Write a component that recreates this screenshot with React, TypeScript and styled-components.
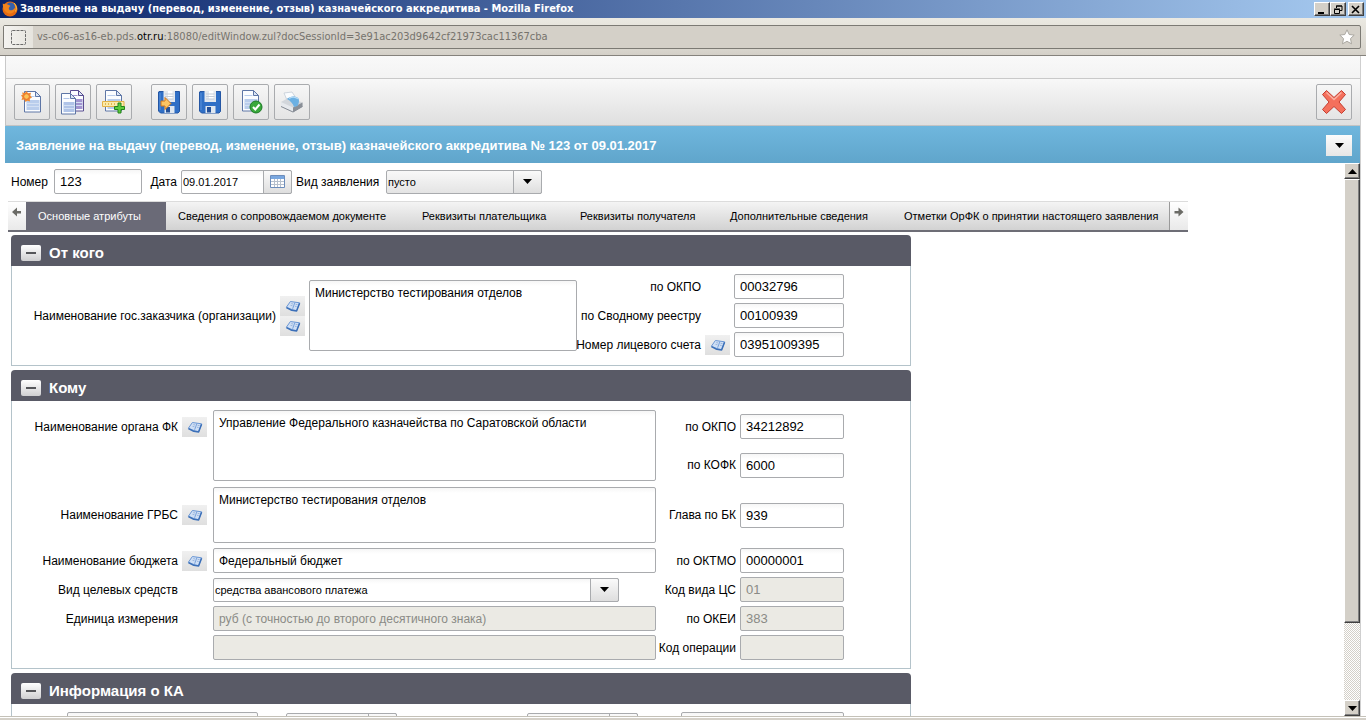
import React from 'react';
import styled, { createGlobalStyle, css } from 'styled-components';

const GlobalStyle = createGlobalStyle`
  *, *::before, *::after { box-sizing: border-box; }
  body {
    margin: 0;
    background: #fff;
    color: #000;
    font-family: "Liberation Sans", Arial, sans-serif;
    font-size: 12px;
  }
  button, input, select, textarea { font: inherit; color: inherit; margin: 0; }
`;

const raised = css`
  border: 1px solid;
  border-color: #fff #404040 #404040 #fff;
  box-shadow: inset -1px -1px 0 #808080;
  background: #d4d0c8;
`;

const Window = styled.div`
  display: flex;
  flex-direction: column;
  height: 100vh;
  overflow: hidden;
`;

const TitleBar = styled.header`
  display: flex;
  align-items: center;
  flex: none;
  height: 18px;
  padding: 0 2px 0 2px;
  gap: 2px;
  color: #fff;
  background: linear-gradient(90deg, #0a246a, #a6caf0);
`;

const WindowTitle = styled.h1`
  flex: 1;
  margin: 0;
  font: bold 11px/16px "DejaVu Sans Condensed", "DejaVu Sans", sans-serif;
  white-space: nowrap;
`;

const WindowButton = styled.button<{ $apart?: boolean }>`
  ${raised}
  display: grid;
  place-items: center;
  width: 16px;
  height: 14px;
  padding: 0;
  margin-left: ${p => (p.$apart ? 0 : -2)}px;
`;

const AddressBar = styled.div`
  flex: none;
  padding: 7px 5px 6px 3px;
  background: linear-gradient(#ebe9e2, #dad7cf 80%, #d4d0c8);
  border-bottom: 1px solid #85827c;
`;

const AddressField = styled.div`
  display: flex;
  align-items: center;
  height: 24px;
  padding-right: 5px;
  border: 1px solid #7c7a74;
  border-radius: 2px;
  background: #d4d0c8;
`;

const SiteBadge = styled.span`
  display: grid;
  place-items: center;
  width: 29px;
  height: 22px;
  background: linear-gradient(90deg, #f4f3f0, #e6e4de);
`;

const Address = styled.p`
  flex: 1;
  margin: 0;
  padding-left: 4px;
  font: 11px/16px "DejaVu Sans Condensed", "DejaVu Sans", sans-serif;
  color: #76736d;
  b { color: #000; font-weight: normal; }
`;

const Page = styled.main`
  display: flex;
  flex: 1;
  flex-direction: column;
  min-height: 0;
  margin: 0 5px;
  border: 1px solid #cfcfcf;
  border-width: 0 1px 0 0;
`;

const MenuStrip = styled.div`
  flex: none;
  height: 23px;
  background: linear-gradient(#f9f9f9, #f3f3f3);
  border: 1px solid #c9c9c9;
  border-width: 0 0 1px 1px;
`;

const Toolbar = styled.div`
  display: flex;
  flex: none;
  align-items: center;
  gap: 5px;
  height: 47px;
  padding: 0 8px;
  background: linear-gradient(#f8f8f8, #dfdfdf);
  border: 1px solid #c3c3c3;
  border-width: 0 0 1px 1px;
`;

const ToolButton = styled.button<{ $group?: boolean; $end?: boolean }>`
  display: grid;
  place-items: center;
  width: 36px;
  height: 36px;
  padding: 0;
  margin-left: ${p => (p.$end ? 'auto' : p.$group ? '14px' : '0')};
  border: 1px solid #a9abae;
  border-radius: 2px;
  background: linear-gradient(#f6f6f6, #e4e4e4);
`;

const DocumentTitle = styled.div`
  display: flex;
  flex: none;
  align-items: center;
  justify-content: space-between;
  height: 37px;
  padding: 2px 8px 0 11px;
  color: #fff;
  background: linear-gradient(#6fb7de, #60a5cb);
  h2 { margin: 0; font-size: 13px; line-height: 16px; white-space: nowrap; }
`;

const TitleMenu = styled.button`
  display: grid;
  place-items: center;
  width: 26px;
  height: 21px;
  padding: 0;
  border: 0;
  background: linear-gradient(#fcfcfc, #e6e6e6);
`;

const Viewport = styled.div`
  display: flex;
  flex: 1;
  min-height: 0;
`;

const Content = styled.div`
  flex: 1;
  min-width: 0;
  padding: 6px 6px 0;
  overflow: hidden;
`;

const ScrollTrack = styled.div`
  display: flex;
  flex-direction: column;
  width: 16px;
  background: repeating-conic-gradient(#d4d0c8 0 25%, #fff 0 50%) 0 0 / 2px 2px;
`;

const ScrollButton = styled.button`
  ${raised}
  display: grid;
  place-items: center;
  flex: none;
  height: 16px;
  padding: 0;
`;

const ScrollThumb = styled.div`
  ${raised}
  flex: 444;
`;

const ScrollRest = styled.div`
  flex: 77;
`;

const StatusBar = styled.footer`
  flex: none;
  height: 4px;
  border-top: 1px solid #c4c1b8;
  background: linear-gradient(#fff 1px, #d4d0c8 1px);
`;

const HeadFields = styled.div`
  display: grid;
  grid-template-columns: 39px 88px 31px 111px 86px 156px;
  align-items: center;
  gap: 4px;
  height: 25px;
`;

const Label = styled.label<{ $start?: boolean }>`
  display: flex;
  justify-content: ${p => (p.$start ? 'flex-start' : 'flex-end')};
  line-height: 16px;
  white-space: nowrap;
`;

const fieldLook = css`
  border: 1px solid #a9abae;
  border-radius: 2px;
  background: linear-gradient(#f6f6f6, #fff 5px);
  outline: none;
  &:disabled {
    background: #ebeae4;
    color: #8a8a86;
    opacity: 1;
  }
`;

const Field = styled.input<{ $prose?: boolean }>`
  ${fieldLook}
  display: block;
  width: 100%;
  height: 25px;
  padding: 0 5px;
  font-size: ${p => (p.$prose ? 12 : 13)}px;
`;

const Area = styled.textarea<{ $height: number }>`
  ${fieldLook}
  display: block;
  width: 100%;
  height: ${p => p.$height}px;
  padding: 4px 5px;
  line-height: 16px;
  resize: none;
`;

const Combo = styled.div<{ $width: number; $muted?: boolean }>`
  position: relative;
  flex: none;
  width: ${p => p.$width}px;
  height: 24px;
  > input, > select {
    ${fieldLook}
    appearance: none;
    width: 100%;
    height: 24px;
    padding: 0 30px 0 1px;
    font-size: 11px;
    ${p => p.$muted && css`background: linear-gradient(#f8f8f8, #e4e4e4);`}
  }
`;

const ComboTrigger = styled.span`
  position: absolute;
  top: 0;
  right: 0;
  display: grid;
  place-items: center;
  width: 29px;
  height: 24px;
  border: 1px solid #a9abae;
  border-radius: 0 2px 2px 0;
  background: linear-gradient(#fafafa, #dedede);
  pointer-events: none;
`;

const TabBar = styled.nav`
  display: flex;
  max-width: 1180px;
  height: 31px;
  margin: 7px 0 3px -3px;
  border-top: 1px solid #dcdcdc;
  border-bottom: 2px solid #6d6d76;
  background: linear-gradient(#f4f4f4, #d2d2d2);
`;

const TabArrow = styled.button`
  display: grid;
  place-items: start center;
  flex: none;
  width: 18px;
  padding: 5px 0 0;
  border: 0;
  background: linear-gradient(#fff, #e9e9e9);
`;

const TabList = styled.div`
  display: grid;
  grid-template-columns: 140px 244px 158px 150px 174px 1fr;
  flex: 1;
  min-width: 0;
  overflow: hidden;
  border-right: 1px solid #9a9a9a;
`;

const Tab = styled.button<{ $active?: boolean }>`
  padding: 0 12px;
  border: 0;
  font-size: 11px;
  line-height: 16px;
  text-align: left;
  white-space: nowrap;
  color: ${p => (p.$active ? '#fff' : '#000')};
  background: ${p => (p.$active ? '#6a6a77' : 'transparent')};
`;

const Panel = styled.section`
  max-width: 900px;
  margin-bottom: 4px;
`;

const PanelHeader = styled.div`
  display: flex;
  align-items: center;
  gap: 8px;
  height: 31px;
  padding: 5px 10px 0;
  border-radius: 4px 4px 0 0;
  color: #fff;
  background: #595a66;
  h3 { margin: 0; font-size: 15px; line-height: 18px; }
`;

const Collapse = styled.button`
  display: grid;
  place-items: center;
  width: 20px;
  height: 16px;
  padding: 0;
  border: 0;
  border-radius: 2px;
  background: linear-gradient(#fff, #cfcfd1);
  &::before {
    content: "";
    width: 10px;
    height: 2px;
    background: #55565a;
  }
`;

const PanelGrid = styled.div<{ $columns: string; $rows?: string }>`
  display: grid;
  grid-template-columns: ${p => p.$columns};
  grid-template-rows: ${p => p.$rows ?? 'auto'};
  align-items: center;
  gap: 4px;
  padding: 8px 0;
  border: 1px solid #b4c3ca;
  border-top: 0;
`;

const Tall = styled.div<{ $column: number; $rows: number }>`
  grid-column: ${p => p.$column};
  grid-row: 1 / span ${p => p.$rows};
`;

const Cell = styled.div<{ $column: number }>`
  grid-column: ${p => p.$column};
`;

const BookButton = styled.button`
  display: grid;
  place-items: center;
  width: 25px;
  height: 20px;
  padding: 0;
  border: 0;
  background: linear-gradient(#f0f0f0, #dfdfdf);
`;

const Caret = ({ up = false }: { up?: boolean }) => (
  <svg width="9" height="5" viewBox="0 0 9 5" aria-hidden="true">
    <path d={up ? 'M0 5h9L4.5 0z' : 'M0 0h9L4.5 5z'} fill="#000" />
  </svg>
);

const Book = ({ label }: { label: string }) => (
  <BookButton type="button" aria-label={label}>
    <svg width="16" height="14" viewBox="0 0 16 14" aria-hidden="true">
      <path d="M5.4 2.500 14.600 3.800 11.600 11.600 8 11 1.400 8.200z" fill="#cfdff5" stroke="#6b97d4" strokeLinejoin="round" />
      <path d="M1.400 8.600 6.800 11.300 11.600 11.900 14.600 4.200" fill="none" stroke="#3b6fb8" strokeWidth="1.500" strokeLinejoin="round" />
      <path d="M10 3.300 7.600 9.800" stroke="#7aa3dc" />
      <path d="M6.300 4.600l2 .4M5.500 6.300l2 .5M10.600 5.300l2 .4M9.900 7.200l1.800.5" stroke="#8eabd6" strokeWidth=".8" />
    </svg>
  </BookButton>
);

const Sheet = ({ x = 0, y = 0, w = 16, tone = '#b9cdec', edge = '#5e76a6' }: {
  x?: number; y?: number; w?: number; tone?: string; edge?: string;
}) => (
  <g transform={`translate(${x} ${y})`}>
    <path d={`M.5.5h${w - 6}l5 5v15.500H.5z`} fill="#fbfdff" stroke={edge} />
    <path d={`M2.500 9h${w - 4}v10h-${w - 4}z`} fill={tone} />
    <path d={`M2.500 5.500h${w - 9}`} stroke={tone} />
    <path d={`M2.500 12.500h${w - 4}M2.500 15.500h${w - 4}`} stroke="#d3e0f3" />
    <path d={`M${w - 5.5}.5v5h5z`} fill="#dbe6f5" stroke={edge} />
  </g>
);

const Floppy = () => (
  <g>
    <path d="M3 2.500h20.500v20L22 24H4.500L2.500 22V3z" fill="#2f6fc6" stroke="#2456a4" />
    <path d="M4 4v17" stroke="#5b93dc" />
    <path d="M7.500 2h11.500v11H7.500z" fill="#e3e8ee" />
    <path d="M12 2h4.500v8H12z" fill="#fff" />
    <path d="M9 5h8.500M9 7.500h8.500M9 10h8.500" stroke="#c3ccd9" />
    <path d="M8.500 17h10v7h-10z" fill="#dfe7f0" />
    <path d="M10 18h4v5.500h-4z" fill="#235099" />
  </g>
);

const Glyph = ({ children }: { children: React.ReactNode }) => (
  <svg width="26" height="26" viewBox="0 0 26 26" aria-hidden="true">{children}</svg>
);

const NewIcon = () => (
  <Glyph>
    <Sheet x={5} y={2} w={17} />
    <path d="M3 3.500l2.800.6L7.500 2l1.500 2.200 3-.4-.7 2.800 1.700 1.900-2.200 1.300.2 2.700-2.700-.8L6.500 13l-1.200-2.400-2.800.3.900-2.600L2 6.500l1.800-.9z" fill="#f08a30" />
    <circle cx="7.500" cy="7.500" r="2.800" fill="#fbc558" stroke="#e8662a" strokeWidth=".8" />
  </Glyph>
);

const CopyIcon = () => (
  <Glyph>
    <Sheet x={10} y={1} w={14} tone="#a294cf" edge="#594d91" />
    <Sheet x={1} y={4} w={15} tone="#b0c4e8" />
  </Glyph>
);

const AddIcon = () => (
  <Glyph>
    <Sheet x={4} y={1} w={17} />
    <path d="M1.500 12.500h21.500v5H1.500z" fill="#fbeaa8" stroke="#e2b24a" />
    <path d="M4.500 14v2M7.500 14v2M10.500 14v2M13.500 14v2" stroke="#e0b654" />
    <path d="M17 14h3v3.500h3.500v3H20V24h-3v-3.500h-3.500v-3H17z" fill="#5dcc3c" stroke="#22821a" />
  </Glyph>
);

const SaveSendIcon = () => (
  <Glyph>
    <Floppy />
    <path d="M5 12h4V8.500l6 6L9 20.500V17H5z" fill="#fcc463" stroke="#cf7418" />
  </Glyph>
);

const SaveIcon = () => (
  <Glyph>
    <Floppy />
  </Glyph>
);

const CheckIcon = () => (
  <Glyph>
    <Sheet x={4} y={1} w={17} />
    <circle cx="18" cy="18" r="6" fill="#39a83b" stroke="#1c7a26" />
    <path d="m15 18 2.300 2.500L21.500 15.500" fill="none" stroke="#fff" strokeWidth="2" />
  </Glyph>
);

const PrintIcon = () => (
  <Glyph>
    <path d="M2 13 10 8.500l13.500 5v4L14 23.500 2 17.500z" fill="#d2d6db" />
    <path d="M2 13l12 5.500v4.500L2 17.500z" fill="#e6e9ed" />
    <path d="M14 18.500 23.500 13.500v4L14 23z" fill="#8a8f97" />
    <path d="M2 17.500 14 23l9.500-5.500" fill="none" stroke="#858b94" />
    <path d="M5 4 13 3l3 4.500-8.500 2.500z" fill="#fafcfe" stroke="#c3ccd6" strokeWidth=".8" />
    <path d="M8 10c3-3 8.500-3.500 11.500-.5 1 2 .5 5-1 7.500L15 18c-1-3.500-3.500-6-7-8z" fill="#6bb0e3" />
    <path d="M10 9.500c3-1.800 6.500-1.600 9 .3" fill="none" stroke="#b4dbf6" strokeWidth="1.200" />
  </Glyph>
);

const CloseIcon = () => (
  <Glyph>
    <path d="M5.500 1.500 13 8.500l7.500-7L24.500 5.500 18 13l6.500 7.500-4 4L13 17.500l-7.500 7-4-4L8 13 1.500 5.500z" fill="#f4705c" stroke="#c43d30" strokeLinejoin="round" />
    <path d="M5.500 3.500 13 10.500l7.500-7" fill="none" stroke="#fbb0a2" strokeWidth="1.500" />
  </Glyph>
);

const FirefoxIcon = () => (
  <svg width="16" height="16" viewBox="0 0 16 16" aria-hidden="true">
    <circle cx="8" cy="8" r="7.500" fill="#e66a12" />
    <circle cx="8.500" cy="6" r="4.500" fill="#3560ad" />
    <path d="M.8 2.500c1 .8 2 .7 3 .5C5.500 3 7 4 8.500 5 7 6 6.500 7 7 8.500c1.500 1.500 4 1 6-1.500.5 3-2 5.500-5 5.500S.5 10 .8 2.500z" fill="#f2841c" />
    <path d="M12 2c2.500 2.500 3 5.500 1.500 8.500" fill="none" stroke="#fbc53c" />
  </svg>
);

const tabs = [
  'Основные атрибуты',
  'Сведения о сопровождаемом документе',
  'Реквизиты плательщика',
  'Реквизиты получателя',
  'Дополнительные сведения',
  'Отметки ОрФК о принятии настоящего заявления',
];

const tools = [
  { label: 'Создать', Icon: NewIcon },
  { label: 'Копировать', Icon: CopyIcon },
  { label: 'Добавить', Icon: AddIcon },
  { label: 'Сохранить и отправить', Icon: SaveSendIcon, group: true },
  { label: 'Сохранить', Icon: SaveIcon },
  { label: 'Проверить', Icon: CheckIcon },
  { label: 'Печать', Icon: PrintIcon },
];

const Section = ({ title, children }: { title: string; children: React.ReactNode }) => (
  <Panel>
    <PanelHeader>
      <Collapse type="button" aria-label={`Свернуть: ${title}`} />
      <h3>{title}</h3>
    </PanelHeader>
    {children}
  </Panel>
);

const Coded = ({ id, label, value, disabled }: {
  id: string; label: string; value: string; disabled?: boolean;
}) => (
  <>
    <Cell $column={4}><Label htmlFor={id}>{label}</Label></Cell>
    <Field id={id} defaultValue={value} disabled={disabled} />
  </>
);

export default function App() {
  return (
    <Window>
      <GlobalStyle />
      <TitleBar>
        <FirefoxIcon />
        <WindowTitle>Заявление на выдачу (перевод, изменение, отзыв) казначейского аккредитива - Mozilla Firefox</WindowTitle>
        <WindowButton type="button" aria-label="Свернуть окно">
          <svg width="10" height="9" aria-hidden="true"><path d="M1 7h6v2H1z" /></svg>
        </WindowButton>
        <WindowButton type="button" aria-label="Восстановить окно">
          <svg width="10" height="9" aria-hidden="true">
            <path d="M3.500 3V1H9v4.500H7M3 1h6" fill="none" stroke="#000" />
            <path d="M1.500 4.500h5v4h-5zM1 4h6" fill="none" stroke="#000" />
          </svg>
        </WindowButton>
        <WindowButton type="button" aria-label="Закрыть окно" $apart>
          <svg width="10" height="9" aria-hidden="true"><path d="m1 1 7 7M8 1 1 8" stroke="#000" strokeWidth="1.600" /></svg>
        </WindowButton>
      </TitleBar>
      <AddressBar>
        <AddressField>
          <SiteBadge>
            <svg width="15" height="15" aria-hidden="true">
              <rect x=".5" y=".5" width="14" height="14" rx="1" fill="none" stroke="#6b6b6b" strokeDasharray="3 1" />
            </svg>
          </SiteBadge>
          <Address>vs-c06-as16-eb.pds.<b>otr.ru</b>:18080/editWindow.zul?docSessionId=3e91ac203d9642cf21973cac11367cba</Address>
          <svg width="16" height="16" viewBox="0 0 16 16" aria-hidden="true">
            <path d="m8 .8 2.200 4.700 5 .6-3.700 3.500 1 5.200L8 12.300l-4.500 2.500 1-5.200L.8 6.100l5-.6z" fill="#fff" stroke="#aaa7a0" />
          </svg>
        </AddressField>
      </AddressBar>
      <Page>
        <MenuStrip />
        <Toolbar>
          {tools.map(({ label, Icon, group }) => (
            <ToolButton key={label} type="button" aria-label={label} $group={group}><Icon /></ToolButton>
          ))}
          <ToolButton type="button" aria-label="Закрыть" $end><CloseIcon /></ToolButton>
        </Toolbar>
        <DocumentTitle>
          <h2>Заявление на выдачу (перевод, изменение, отзыв) казначейского аккредитива № 123 от 09.01.2017</h2>
          <TitleMenu type="button" aria-label="Меню документа"><Caret /></TitleMenu>
        </DocumentTitle>
        <Viewport>
          <Content>
            <HeadFields>
              <Label htmlFor="number" $start>Номер</Label>
              <Field id="number" defaultValue="123" />
              <Label htmlFor="date">Дата</Label>
              <Combo $width={111}>
                <input id="date" defaultValue="09.01.2017" />
                <ComboTrigger>
                  <svg width="15" height="13" aria-hidden="true">
                    <path d="M.5.5h14v12H.5z" fill="#fff" stroke="#6c8dbb" />
                    <path d="M1 1h13v3H1z" fill="#79a7df" />
                    <path d="M1 6.500h13M1 9.500h13M4.500 4v8M7.500 4v8M10.500 4v8" stroke="#b6c0cd" />
                  </svg>
                </ComboTrigger>
              </Combo>
              <Label htmlFor="kind" $start>Вид заявления</Label>
              <Combo $width={156} $muted>
                <select id="kind"><option>пусто</option></select>
                <ComboTrigger><Caret /></ComboTrigger>
              </Combo>
            </HeadFields>

            <TabBar>
              <TabArrow type="button" aria-label="Предыдущие вкладки">
                <svg width="10" height="10" aria-hidden="true"><path d="M0 5l5-4.500V4h4v2.500H5v3z" fill="#6b6b66" /></svg>
              </TabArrow>
              <TabList>
                {tabs.map((tab, i) => <Tab key={tab} type="button" $active={i === 0}>{tab}</Tab>)}
              </TabList>
              <TabArrow type="button" aria-label="Следующие вкладки">
                <svg width="10" height="10" aria-hidden="true"><path d="M9.500 5l-5-4.500V4h-4v2.500h4v3z" fill="#6b6b66" /></svg>
              </TabArrow>
            </TabBar>

            <Section title="От кого">
              <PanelGrid $columns="264px 25px 268px 120px 25px 110px">
                <Tall $column={1} $rows={3}><Label htmlFor="customer">Наименование гос.заказчика (организации)</Label></Tall>
                <Tall $column={2} $rows={3}>
                  <Book label="Справочник заказчиков" />
                  <Book label="Справочник организаций" />
                </Tall>
                <Tall $column={3} $rows={3}><Area id="customer" $height={71} defaultValue="Министерство тестирования отделов" /></Tall>
                <Cell $column={4}><Label htmlFor="from-okpo">по ОКПО</Label></Cell>
                <Cell $column={6}><Field id="from-okpo" defaultValue="00032796" /></Cell>
                <Cell $column={4}><Label htmlFor="registry">по Сводному реестру</Label></Cell>
                <Cell $column={6}><Field id="registry" defaultValue="00100939" /></Cell>
                <Cell $column={4}><Label htmlFor="account">Номер лицевого счета</Label></Cell>
                <Book label="Справочник счетов" />
                <Field id="account" defaultValue="03951009395" />
              </PanelGrid>
            </Section>

            <Section title="Кому">
              <PanelGrid $columns="166px 27px 443px 76px 104px" $rows="35px 34px 58px repeat(4, 25px)">
                <Label htmlFor="organ">Наименование органа ФК</Label>
                <Book label="Справочник органов ФК" />
                <Tall $column={3} $rows={2}><Area id="organ" $height={71} defaultValue="Управление Федерального казначейства по Саратовской области" /></Tall>
                <Coded id="to-okpo" label="по ОКПО" value="34212892" />
                <Coded id="kofk" label="по КОФК" value="6000" />

                <Label htmlFor="grbs">Наименование ГРБС</Label>
                <Book label="Справочник ГРБС" />
                <Area id="grbs" $height={56} defaultValue="Министерство тестирования отделов" />
                <Coded id="chapter" label="Глава по БК" value="939" />

                <Label htmlFor="budget">Наименование бюджета</Label>
                <Book label="Справочник бюджетов" />
                <Field id="budget" defaultValue="Федеральный бюджет" $prose />
                <Coded id="oktmo" label="по ОКТМО" value="00000001" />

                <Label htmlFor="funds">Вид целевых средств</Label>
                <Cell $column={3}>
                  <Combo $width={406}>
                    <select id="funds"><option>средства авансового платежа</option></select>
                    <ComboTrigger><Caret /></ComboTrigger>
                  </Combo>
                </Cell>
                <Coded id="funds-code" label="Код вида ЦС" value="01" disabled />

                <Label htmlFor="unit">Единица измерения</Label>
                <Cell $column={3}><Field id="unit" defaultValue="руб (с точностью до второго десятичного знака)" $prose disabled /></Cell>
                <Coded id="okei" label="по ОКЕИ" value="383" disabled />

                <Cell $column={3}><Field aria-label="Операция" disabled /></Cell>
                <Coded id="operation" label="Код операции" value="" disabled />
              </PanelGrid>
            </Section>

            <Section title="Информация о КА">
              <PanelGrid $columns="51px 191px 20px 111px 122px 111px 35px 163px">
                <Cell $column={2}><Field aria-label="Номер КА" /></Cell>
                <Cell $column={4}>
                  <Combo $width={111}><input aria-label="Дата КА" /><ComboTrigger /></Combo>
                </Cell>
                <Cell $column={6}>
                  <Combo $width={111}><input aria-label="Срок действия" /><ComboTrigger /></Combo>
                </Cell>
                <Cell $column={8}><Field aria-label="Сумма" /></Cell>
              </PanelGrid>
            </Section>
          </Content>
          <ScrollTrack>
            <ScrollButton type="button" aria-label="Прокрутить вверх"><Caret up /></ScrollButton>
            <ScrollThumb />
            <ScrollRest />
            <ScrollButton type="button" aria-label="Прокрутить вниз"><Caret /></ScrollButton>
          </ScrollTrack>
        </Viewport>
      </Page>
      <StatusBar />
    </Window>
  );
}
